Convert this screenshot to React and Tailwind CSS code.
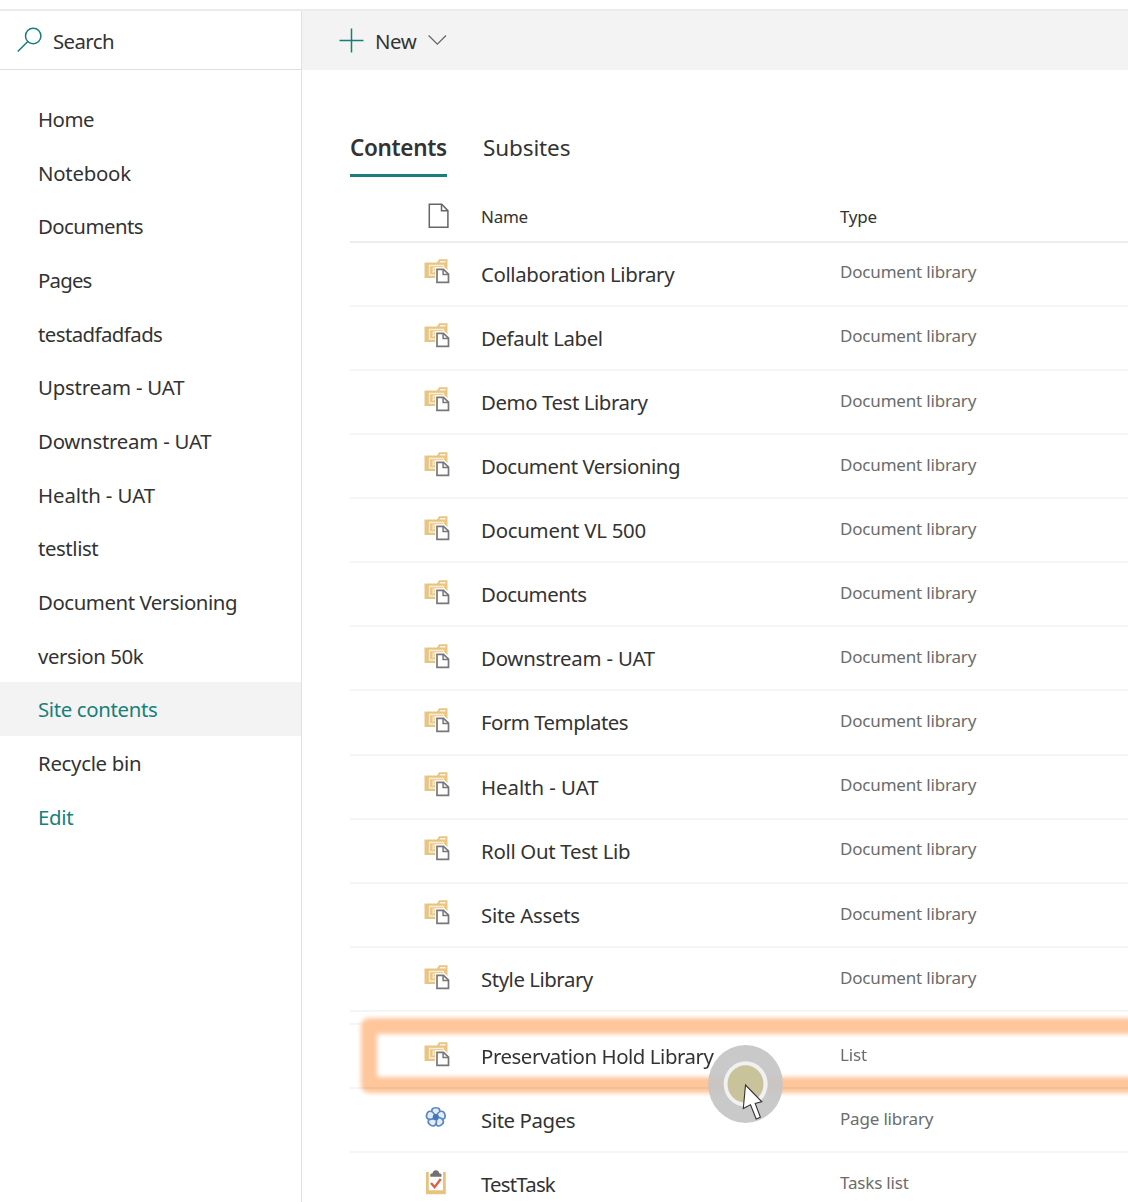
import React from "react";

const NAV = [
  ["Home", "tracking-[-0.5px]"],
  ["Notebook", "tracking-[-0.25px]"],
  ["Documents", "tracking-[-0.55px]"],
  ["Pages", "tracking-[-0.8px]"],
  ["testadfadfads", "tracking-[-0.57px]"],
  ["Upstream - UAT", "tracking-[-0.22px]"],
  ["Downstream - UAT", "tracking-[-0.25px]"],
  ["Health - UAT", "tracking-[-0.1px]"],
  ["testlist", "tracking-[-0.42px]"],
  ["Document Versioning", "tracking-[-0.45px]"],
  ["version 50k", "tracking-[-0.4px]"],
  ["Site contents", "tracking-[-0.35px]"],
  ["Recycle bin", "tracking-[-0.3px]"],
  ["Edit", "tracking-[-0.3px]"],
];

const ROWS = [
  ["Collaboration Library", "tracking-[-0.38px]"],
  ["Default Label", "tracking-[-0.4px]"],
  ["Demo Test Library", "tracking-[-0.42px]"],
  ["Document Versioning", "tracking-[-0.45px]"],
  ["Document VL 500", "tracking-[-0.25px]"],
  ["Documents", "tracking-[-0.5px]"],
  ["Downstream - UAT", "tracking-[-0.22px]"],
  ["Form Templates", "tracking-[-0.5px]"],
  ["Health - UAT", "tracking-[-0.05px]"],
  ["Roll Out Test Lib", "tracking-[-0.3px]"],
  ["Site Assets", "tracking-[-0.27px]"],
  ["Style Library", "tracking-[-0.46px]"],
];

function LibraryIcon() {
  return (
    <svg width="26" height="26" viewBox="0 0 26 26" fill="none">
      <path d="M.5 4.500h12.500l2-3.200h8.500V20H.5z" fill="#e9c583" />
      <path d="M15.300 4.400l.9-1.500h5.400v1.500z" fill="#fbf1dd" />
      <path d="M5.500 7.500h14v9.500h-14z" stroke="#f9eed9" strokeWidth="1.300" />
      <path d="M8.700 10.200h6M8.700 13.200h4M9.200 10v5" stroke="#f9eed9" strokeWidth="1.200" />
      <path d="M11 9.300h9.500l5.500 5.200V26H11z" fill="#fff" />
      <path d="M13 11.400h6.500l5 4.800v8.200H13z" fill="#fff" stroke="#777" strokeWidth="1.700" />
      <path d="M19.100 11.600v4.900h5.200" stroke="#777" strokeWidth="1.500" />
    </svg>
  );
}

function FlowerIcon() {
  return (
    <svg width="26" height="26" viewBox="0 0 26 26" fill="none">
      <g stroke="#5b87bf" strokeWidth="1.700" fill="#e3ecf8">
        {[0, 72, 144, 216, 288].map((a) => (
          <path
            key={a}
            transform={`rotate(${a} 11.800 12.200)`}
            d="M11.800 12.200C8.600 9.800 7.200 6.800 8 4.600 9 2.100 14.600 2.100 15.600 4.600 16.400 6.800 15 9.800 11.800 12.200z"
          />
        ))}
      </g>
      <circle cx="11.800" cy="12.200" r="3.100" fill="#4377ba" />
    </svg>
  );
}

function TaskIcon() {
  return (
    <svg width="26" height="26" viewBox="0 0 26 26" fill="none">
      <path d="M2 3h2.800v18.200h14.200V3h2.800v22.300H2z" fill="#e8c37f" />
      <path d="M6.300 7.800V6.100c0-1 .8-1.700 2.300-1.800C8.900 2.300 10 1.200 11.900 1.200s3 1.100 3.300 3.100c1.500.1 2.300.8 2.300 1.800v1.700z" fill="#717171" />
      <path d="M7 14l3.600 4.200L16.800 10" stroke="#d9613f" strokeWidth="2.400" />
    </svg>
  );
}

function PageIcon() {
  return (
    <svg width="22" height="26" viewBox="0 0 22 26" fill="none" stroke="#666" strokeWidth="1.500">
      <path d="M1.300 1.300h12.400l6.200 6.300v16.700H1.300z" />
      <path d="M13.500 1.500v6.300h6.400" />
    </svg>
  );
}

function ClickMarker() {
  return (
    <svg className="absolute left-[357px] top-[18px]" width="78" height="82" viewBox="0 0 78 82">
      <ellipse cx="38.500" cy="41" rx="37.400" ry="39" fill="#c5c5c5" fillOpacity=".93" />
      <ellipse cx="38.700" cy="41" rx="22" ry="22.700" fill="#f1f1f1" />
      <ellipse cx="38.500" cy="41" rx="18" ry="18.700" fill="#c9c39b" />
      <path d="M38.500 42L36.300 65.500l7.200-3.700 5.700 14.200 4.200-1.700-5.200-13.900 6.600-1.600z" fill="#fff" stroke="#333" strokeWidth="1.100" />
    </svg>
  );
}

function Row({ name, tracking, type, icon, children }) {
  return (
    <div className="relative flex h-[64.14px] shrink-0 border-b-2 border-[#f5f5f5]">
      <div className="w-[131px] pl-[74px] pt-[15.600px]">{icon}</div>
      <div className={`w-[359px] pt-[16px] text-[20.400px] leading-[30px] text-[#333] ${tracking}`}>{name}</div>
      <div className="pt-[15.700px] text-[17px] leading-[28px] tracking-[-0.18px] text-[#6c6c6c]">{type}</div>
      {children}
    </div>
  );
}

export default function App() {
  return (
    <div className="flex h-[1202px] w-[1128px] flex-col overflow-hidden whitespace-nowrap bg-white font-['Noto_Sans',sans-serif] text-[#333]">
      <div className="h-[9px] shrink-0" />
      <div className="flex min-h-0 flex-1 border-t-2 border-[#ebebeb]">
        <aside className="w-[302px] shrink-0 border-r border-[#e1e1e1]">
          <div className="flex h-[59px] items-center border-b border-[#dedede]">
            <svg className="ml-[17px]" width="26" height="26" viewBox="0 0 26 26" fill="none" stroke="#177d7c" strokeWidth="1.500">
              <circle cx="16.200" cy="9" r="7.700" />
              <path d="M10.800 14.500L.8 24.500" />
            </svg>
            <span className="ml-[10px] mt-[3px] text-[20.400px] tracking-[-0.6px]">Search</span>
          </div>
          <nav className="pt-[21.400px]">
            {NAV.map(([label, tracking], i) => (
              <div
                key={label}
                className={`flex h-[53.700px] items-center pl-[38px] pt-[2px] text-[20.400px] ${tracking} ${
                  i === 11 ? "bg-[#f3f3f3] text-[#17807c]" : i === 13 ? "text-[#17807c]" : "text-[#333]"
                }`}
              >
                {label}
              </div>
            ))}
          </nav>
        </aside>
        <main className="flex min-w-0 flex-1 flex-col">
          <div className="flex h-[59px] shrink-0 items-center bg-[#f3f3f3]">
            <svg className="ml-[37px]" width="26" height="26" viewBox="0 0 26 26" stroke="#177d7c" strokeWidth="1.500">
              <path d="M.5 12.500h24M12.500.5v24" />
            </svg>
            <span className="ml-[10px] mt-[2px] text-[20.400px] tracking-[-0.4px]">New</span>
            <svg className="ml-[12px] -mt-px" width="20" height="12" viewBox="0 0 20 12" fill="none" stroke="#666" strokeWidth="1.300">
              <path d="M.6 1.500l8.700 8.600L18 1.500" />
            </svg>
          </div>
          <div className="flex min-h-0 flex-1 flex-col pl-12">
            <div className="mt-[60px] flex h-[47px] shrink-0 gap-9">
              <div className="h-[47px] w-[97px] border-b-[3px] border-[#17807c] pt-[2px] text-[22.500px] font-semibold leading-[32px] tracking-[-0.35px]">Contents</div>
              <div className="pt-[2px] text-[22.500px] leading-[32px] tracking-[-0.12px]">Subsites</div>
            </div>
            <div className="flex h-[65.600px] shrink-0 border-b-2 border-[#ececec] text-[17px] leading-[28px] tracking-[-0.25px]">
              <div className="w-[131px] pl-[78px] pt-[26px]"><PageIcon /></div>
              <div className="w-[359px] pt-[26px]">Name</div>
              <div className="pt-[26px]">Type</div>
            </div>
            {ROWS.map(([name, tracking]) => (
              <Row key={name} name={name} tracking={tracking} type="Document library" icon={<LibraryIcon />} />
            ))}
            <div className="h-[13px] shrink-0 border-b-2 border-[#f5f5f5]" />
            <div className="relative z-10 shrink-0">
              <Row name="Preservation Hold Library" tracking="tracking-[-0.44px]" type="List" icon={<LibraryIcon />}>
                <div className="absolute -top-[7px] left-[10.500px] h-[75px] w-[820px] rounded-[8px] border-[16.500px] border-[#ffc59b] mix-blend-multiply blur-[2px]" />
                <ClickMarker />
              </Row>
            </div>
            <Row name="Site Pages" tracking="tracking-[-0.4px]" type="Page library" icon={<FlowerIcon />} />
            <Row name="TestTask" tracking="tracking-[-0.8px]" type="Tasks list" icon={<TaskIcon />} />
          </div>
        </main>
      </div>
    </div>
  );
}
